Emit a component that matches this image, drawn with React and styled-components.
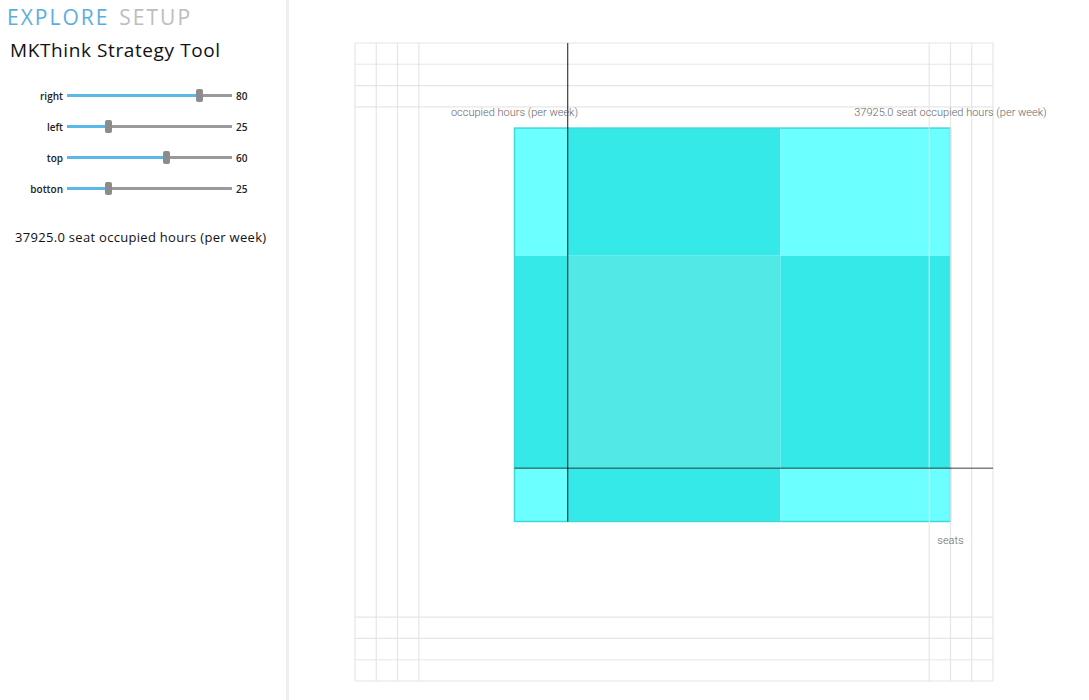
import React from 'react'
import styled, { createGlobalStyle } from 'styled-components'

const GlobalStyle = createGlobalStyle`
  html, body { margin: 0; padding: 0; background: #fff; }
  body { font-family: "Open Sans", "Liberation Sans", sans-serif; }
`

const SIZE = 638
const CELL = SIZE / 30

const sliders = [
  { name: 'right', value: 80 },
  { name: 'left', value: 25 },
  { name: 'top', value: 60 },
  { name: 'botton', value: 25 },
]

function Slider({ name, value }) {
  return (
    <SliderRow>
      <SliderLabel>{name}</SliderLabel>
      <Track>
        <Fill style={{ width: value + '%' }} />
        <Thumb style={{ left: value + '%' }} />
      </Track>
      <SliderValue>{value}</SliderValue>
    </SliderRow>
  )
}

function Chart() {
  const c = n => n * CELL
  const gridAt = [0, 1, 2, 3, 27, 28, 29, 30]
  const xs = [7.5, 10, 20, 28]
  const ys = [4, 10, 20, 22.5]
  // light corners, dark edges, mid centre
  const fills = [
    ['#6bffff', '#35e9e9', '#6bffff'],
    ['#35e9e9', '#52e8e6', '#35e9e9'],
    ['#6bffff', '#35e9e9', '#6bffff'],
  ]

  return (
    <svg width={720} height={660} style={{ overflow: 'visible', display: 'block' }}>
      {fills.map((row, r) =>
        row.map((fill, k) => (
          <rect
            key={r + '-' + k}
            x={c(xs[k])}
            y={c(ys[r])}
            width={c(xs[k + 1] - xs[k])}
            height={c(ys[r + 1] - ys[r])}
            fill={fill}
          />
        ))
      )}
      <rect
        x={c(7.5)}
        y={c(4)}
        width={c(20.5)}
        height={c(18.5)}
        fill='none'
        stroke='#40d8d8'
        strokeWidth='1.5'
      />

      {gridAt.map(g => (
        <g key={g} stroke='#e2e2e2' strokeOpacity='0.85' strokeWidth='1.2'>
          <line x1={c(g)} y1={0} x2={c(g)} y2={SIZE} />
          <line x1={0} y1={c(g)} x2={SIZE} y2={c(g)} />
        </g>
      ))}

      <line x1={c(10)} y1={0} x2={c(10)} y2={c(22.5)} stroke='#000' strokeOpacity='0.7' strokeWidth='1.3' />
      <line x1={c(7.5)} y1={c(20)} x2={SIZE} y2={c(20)} stroke='#000' strokeOpacity='0.5' strokeWidth='1.5' />

      <g fill='#666' fontSize='11' fontFamily='Roboto, "Liberation Sans", sans-serif' textAnchor='middle' fontWeight='300'>
        <text x={c(7.5)} y={73}>occupied hours (per week)</text>
        <text x={c(28)} y={73}>37925.0 seat occupied hours (per week)</text>
        <text x={c(28)} y={501}>seats</text>
      </g>
    </svg>
  )
}

export default function App() {
  return (
    <Page>
      <GlobalStyle />
      <Sidebar>
        <Tabs>
          <Tab active>Explore</Tab>
          <Tab>Setup</Tab>
        </Tabs>
        <Title>MKThink Strategy Tool</Title>
        <Sliders>
          {sliders.map(s => (
            <Slider key={s.name} {...s} />
          ))}
        </Sliders>
        <Summary>37925.0 seat occupied hours (per week)</Summary>
      </Sidebar>
      <Main>
        <Chart />
      </Main>
    </Page>
  )
}

const Page = styled.div`
  display: flex;
  height: 700px;
  overflow: hidden;
`

const Sidebar = styled.div`
  width: 286px;
  flex-shrink: 0;
  border-right: 3px solid #eeeeee;
  padding: 4px 0 0 0;
  box-sizing: content-box;
`

const Tabs = styled.div`
  display: flex;
  gap: 10px;
  padding-left: 7px;
`

const Tab = styled.div`
  font-size: 21px;
  font-weight: 500;
  line-height: 26px;
  letter-spacing: 2px;
  text-transform: uppercase;
  color: ${p => (p.active ? '#5aafe0' : '#bdbdbd')};
  cursor: pointer;
`

const Title = styled.h1`
  margin: 8px 0 0 10px;
  font-size: 19px;
  font-weight: 400;
  line-height: 24px;
  color: #111;
  letter-spacing: 0.6px;
`

const Sliders = styled.div`
  display: flex;
  flex-direction: column;
  gap: 18px;
  margin-top: 27px;
`

const SliderRow = styled.div`
  display: flex;
  align-items: center;
  height: 13px;
`

const SliderLabel = styled.div`
  width: 67px;
  text-align: right;
  font-size: 10px;
  font-weight: 600;
  color: #222;
  padding-right: 4px;
  box-sizing: border-box;
`

const Track = styled.div`
  position: relative;
  width: 165px;
  height: 3px;
  background: #9a9a9a;
`

const Fill = styled.div`
  height: 100%;
  background: #5cb8e8;
`

const Thumb = styled.div`
  position: absolute;
  top: -5px;
  width: 7px;
  height: 13px;
  margin-left: -3px;
  border-radius: 2px;
  background: #8c8c8c;
`

const SliderValue = styled.div`
  margin-left: 4px;
  font-size: 10px;
  font-weight: 600;
  color: #222;
`

const Summary = styled.div`
  margin: 33px 0 0 15px;
  font-size: 13px;
  letter-spacing: 0.3px;
  color: #111;
`

const Main = styled.div`
  flex: 1;
  padding: 43px 0 0 66px;
`
